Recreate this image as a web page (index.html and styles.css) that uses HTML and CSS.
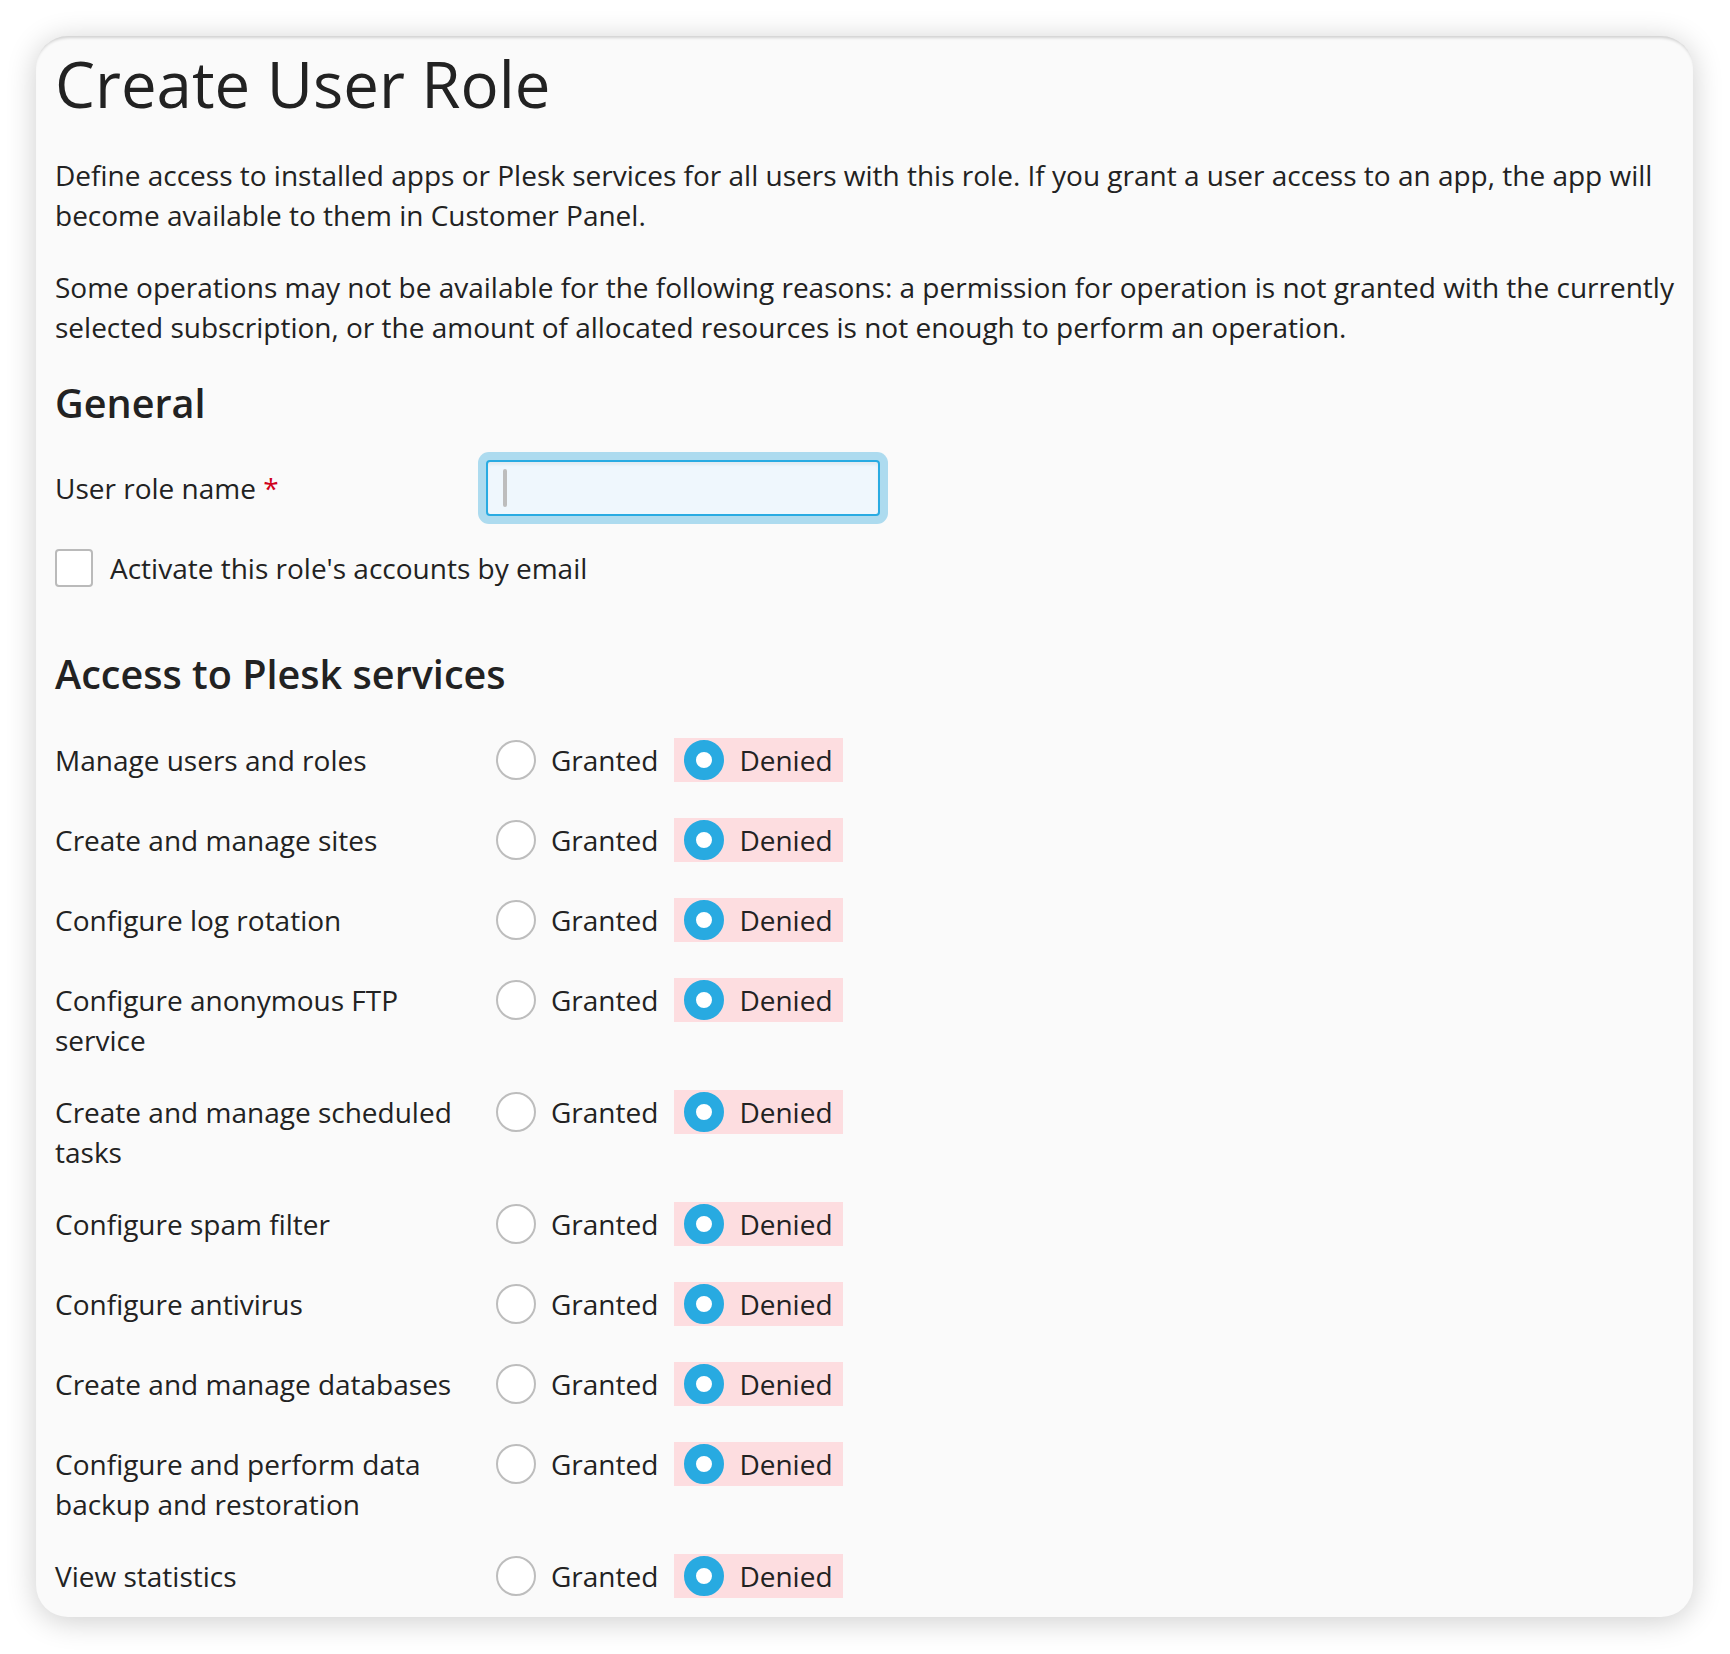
FILE: index.html
```html
<!DOCTYPE html>
<html lang="en">
<head>
<meta charset="utf-8">
<title>Create User Role</title>
<link rel="stylesheet" href="styles.css">
</head>
<body>
<div class="page">
  <div class="card">
    <h1 class="title">Create User Role</h1>
    <p class="intro">Define access to installed apps or Plesk services for all users with this role. If you grant a user access to an app, the app will become available to them in Customer Panel.</p>
    <p class="intro">Some operations may not be available for the following reasons: a permission for operation is not granted with the currently selected subscription, or the amount of allocated resources is not enough to perform an operation.</p>

    <h2 class="section">General</h2>
    <div class="form-row">
      <div class="field-label">User role name <span class="req">*</span></div>
      <div class="input"><span class="caret"></span></div>
    </div>
    <div class="check-row">
      <span class="checkbox"></span>
      <span class="check-label">Activate this role's accounts by email</span>
    </div>

    <h2 class="section section-access">Access to Plesk services</h2>
    <div class="perm-list">
      <div class="perm-row">
        <div class="perm-label">Manage users and roles</div>
        <div class="perm-options"><span class="opt"><span class="radio"></span>Granted</span><span class="opt opt-denied"><span class="radio radio-on"></span>Denied</span></div>
      </div>
      <div class="perm-row">
        <div class="perm-label">Create and manage sites</div>
        <div class="perm-options"><span class="opt"><span class="radio"></span>Granted</span><span class="opt opt-denied"><span class="radio radio-on"></span>Denied</span></div>
      </div>
      <div class="perm-row">
        <div class="perm-label">Configure log rotation</div>
        <div class="perm-options"><span class="opt"><span class="radio"></span>Granted</span><span class="opt opt-denied"><span class="radio radio-on"></span>Denied</span></div>
      </div>
      <div class="perm-row">
        <div class="perm-label">Configure anonymous FTP service</div>
        <div class="perm-options"><span class="opt"><span class="radio"></span>Granted</span><span class="opt opt-denied"><span class="radio radio-on"></span>Denied</span></div>
      </div>
      <div class="perm-row">
        <div class="perm-label">Create and manage scheduled tasks</div>
        <div class="perm-options"><span class="opt"><span class="radio"></span>Granted</span><span class="opt opt-denied"><span class="radio radio-on"></span>Denied</span></div>
      </div>
      <div class="perm-row">
        <div class="perm-label">Configure spam filter</div>
        <div class="perm-options"><span class="opt"><span class="radio"></span>Granted</span><span class="opt opt-denied"><span class="radio radio-on"></span>Denied</span></div>
      </div>
      <div class="perm-row">
        <div class="perm-label">Configure antivirus</div>
        <div class="perm-options"><span class="opt"><span class="radio"></span>Granted</span><span class="opt opt-denied"><span class="radio radio-on"></span>Denied</span></div>
      </div>
      <div class="perm-row">
        <div class="perm-label">Create and manage databases</div>
        <div class="perm-options"><span class="opt"><span class="radio"></span>Granted</span><span class="opt opt-denied"><span class="radio radio-on"></span>Denied</span></div>
      </div>
      <div class="perm-row">
        <div class="perm-label">Configure and perform data backup and restoration</div>
        <div class="perm-options"><span class="opt"><span class="radio"></span>Granted</span><span class="opt opt-denied"><span class="radio radio-on"></span>Denied</span></div>
      </div>
      <div class="perm-row">
        <div class="perm-label">View statistics</div>
        <div class="perm-options"><span class="opt"><span class="radio"></span>Granted</span><span class="opt opt-denied"><span class="radio radio-on"></span>Denied</span></div>
      </div>
    </div>
  </div>
</div>
</body>
</html>
```
FILE: styles.css
```css
html, body {
  margin: 0;
  background: #ffffff;
}

body {
  font-family: "Open Sans", "Noto Sans", sans-serif;
  color: #222222;
}

.page {
  padding: 36px 37px 37px 36px;
}

.card {
  box-sizing: border-box;
  height: 1581px;
  overflow: hidden;
  background: #fafafa;
  border-radius: 32px;
  padding: 8px 10px 0 19px;
  box-shadow: 0 4px 30px rgba(0, 0, 0, 0.2), inset 0 4px 3px -2px rgba(0, 0, 0, 0.16);
}

.title {
  margin: 0 0 31px;
  font-size: 63.5px;
  line-height: 80px;
  font-weight: 400;
  color: #222222;
}

.intro {
  margin: 0 0 32px;
  font-size: 28px;
  line-height: 40px;
}

.section {
  margin: 0 0 33px;
  font-size: 39.6px;
  line-height: 48px;
  font-weight: 600;
  color: #222222;
}

.section-access {
  margin: 62px 0 38px;
}

.form-row {
  display: grid;
  grid-template-columns: 415px 394px;
  column-gap: 16px;
  align-items: center;
  height: 56px;
  margin-bottom: 32px;
  font-size: 28px;
  line-height: 40px;
}

.req {
  color: #d0021b;
}

.input {
  box-sizing: border-box;
  height: 56px;
  display: flex;
  align-items: center;
  padding-left: 15px;
  border: 2px solid #29abe2;
  border-radius: 4px;
  background: #eff7fd;
  box-shadow: 0 0 0 8px #addbef, inset 0 3px 3px rgba(0, 0, 0, 0.05);
}

.caret {
  width: 4px;
  height: 38px;
  border-radius: 2px;
  background: #bdbdbd;
}

.check-row {
  display: flex;
  align-items: center;
  gap: 17px;
  height: 40px;
  font-size: 28px;
  line-height: 40px;
}

.checkbox {
  box-sizing: border-box;
  width: 38px;
  height: 38px;
  border: 2px solid #bababa;
  border-radius: 4px;
  background: #ffffff;
}

.perm-row {
  display: grid;
  grid-template-columns: 415px auto;
  column-gap: 16px;
  align-items: start;
  margin-bottom: 32px;
  font-size: 28px;
  line-height: 40px;
}

.perm-row:last-child {
  margin-bottom: 0;
}

.perm-label {
  margin: 4px 0 -4px;
}

.perm-options {
  display: flex;
  align-items: center;
  gap: 6px;
  height: 48px;
}

.opt {
  display: flex;
  align-items: center;
  gap: 15px;
  height: 44px;
  padding: 0 10px 0 10px;
}

.opt-denied {
  background: #fddde0;
}

.radio {
  box-sizing: border-box;
  width: 40px;
  height: 40px;
  border-radius: 50%;
  border: 2px solid #bdbdbd;
  background: #ffffff;
  flex: none;
}

.radio-on {
  border: 12px solid #28aae1;
  background: #ffffff;
}
```
